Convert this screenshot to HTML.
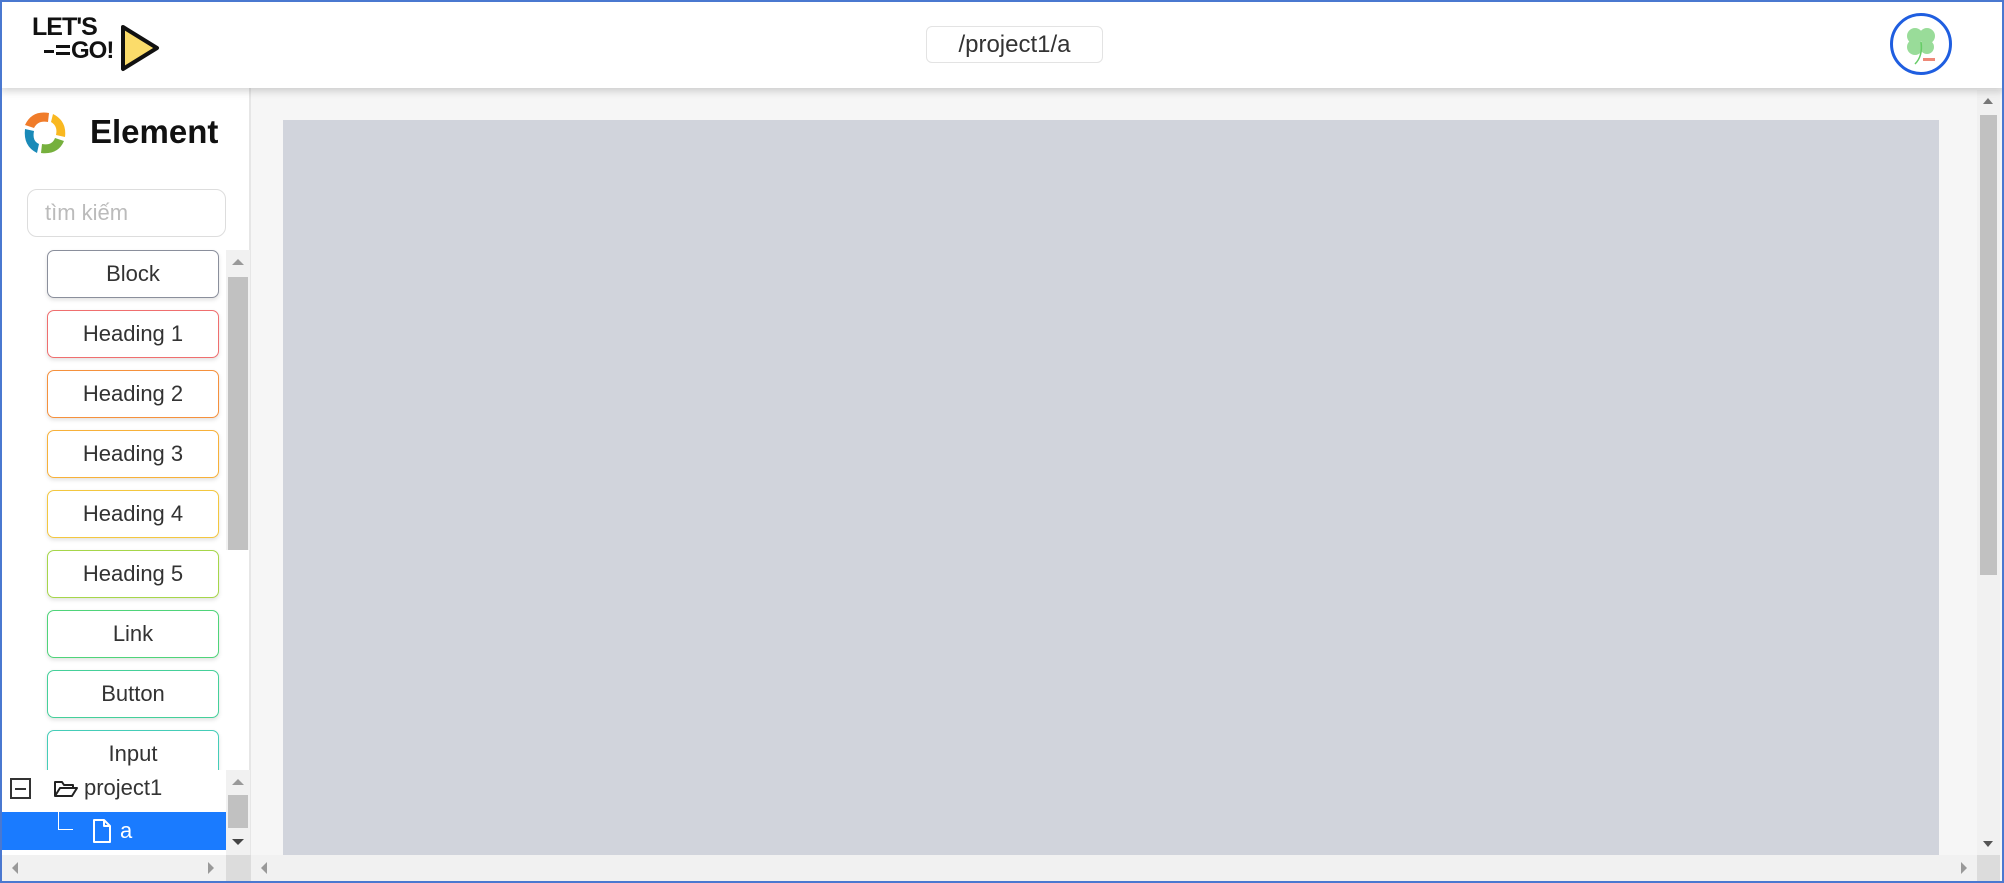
<!DOCTYPE html>
<html><head><meta charset="utf-8"><style>
*{box-sizing:border-box;margin:0;padding:0}
body{width:2004px;height:883px;overflow:hidden;background:#fff;font-family:"Liberation Sans",sans-serif;position:relative}
.frame{position:absolute;inset:0;border:2px solid #4a78d0;z-index:50;pointer-events:none}
.header{position:absolute;left:0;top:0;width:2004px;height:88px;background:#fff;box-shadow:0 3px 8px rgba(0,0,0,.18);z-index:10}
.path{position:absolute;left:926px;top:26px;width:177px;height:37px;border:1px solid #e3e3e3;border-radius:6px;font-size:24px;color:#333;text-align:center;line-height:35px}
.avatar{position:absolute;left:1890px;top:13px;width:62px;height:62px;border:3px solid #1f5ee0;border-radius:50%;background:#fff}
.side{position:absolute;left:0;top:88px;width:251px;height:795px;background:#fff;border-right:2px solid #e6e6e6}
.main{position:absolute;left:251px;top:88px;width:1753px;height:795px;background:#f6f6f6}
.canvas{position:absolute;left:283px;top:120px;width:1656px;height:736px;background:#d1d4dc}
.title{position:absolute;left:90px;top:25px;font-size:33px;font-weight:bold;color:#111}
.search{position:absolute;left:27px;top:101px;width:199px;height:48px;border:1px solid #ddd;border-radius:10px;font-size:22px;color:#bbb;padding-left:17px;line-height:46px}
.btn{position:absolute;left:47px;width:172px;height:48px;border:1.5px solid;border-radius:7px;background:#fff;font-size:22px;color:#333;text-align:center;line-height:45px;box-shadow:0 2px 4px rgba(0,0,0,.12)}
.sb{position:absolute;background:#f1f1f1}
.thumb{position:absolute;background:#c1c1c1}
.tree{position:absolute;left:0;top:770px;width:226px;height:80px;background:#fff}
</style></head><body>
<div class="frame"></div>
<div class="header">
  <div style="position:absolute;left:32px;top:13px;font-size:25px;font-weight:bold;color:#111;letter-spacing:-1px">LET'S</div>
  <div style="position:absolute;left:44px;top:50px;width:10px;height:3px;background:#111"></div>
  <div style="position:absolute;left:56px;top:45px;width:14px;height:3px;background:#111"></div>
  <div style="position:absolute;left:56px;top:52px;width:14px;height:3px;background:#111"></div>
  <div style="position:absolute;left:71px;top:37px;font-size:24px;font-weight:bold;color:#111;letter-spacing:-1px">GO!</div>
  <svg style="position:absolute;left:118px;top:23px" width="44" height="50"><path d="M5 4 L39 25 L5 46 Z" fill="#fbdc6a" stroke="#111" stroke-width="4" stroke-linejoin="round"/></svg>
  <div class="path">/project1/a</div>
  <div class="avatar"><svg width="56" height="56" viewBox="0 0 56 56"><g fill="#8fd98f" opacity=".9"><circle cx="22" cy="20" r="8"/><circle cx="34" cy="20" r="8"/><circle cx="22" cy="31" r="8"/><circle cx="34" cy="31" r="7"/></g><path d="M28 26 Q30 40 22 48" stroke="#6c6" stroke-width="1.5" fill="none"/><rect x="30" y="42" width="12" height="3" fill="#e87"/></svg></div>
</div>
<div class="main"></div>
<div class="canvas"></div>
<div class="sb" style="left:1977px;top:90px;width:23px;height:765px"></div>
<div class="thumb" style="left:1980px;top:115px;width:17px;height:460px"></div>
<div style="position:absolute;left:1983px;top:98px;border:5px solid transparent;border-bottom:6px solid #777;border-top:0"></div>
<div style="position:absolute;left:1983px;top:841px;border:5px solid transparent;border-top:6px solid #555;border-bottom:0"></div>
<div class="sb" style="left:251px;top:855px;width:1726px;height:26px"></div>
<div style="position:absolute;left:261px;top:862px;border:6px solid transparent;border-right:6px solid #999;border-left:0"></div>
<div style="position:absolute;left:1961px;top:862px;border:6px solid transparent;border-left:6px solid #999;border-right:0"></div>
<div class="sb" style="left:1977px;top:855px;width:23px;height:26px;background:#dcdcdc"></div>
<div class="side">
  <svg style="position:absolute;left:22px;top:22px" width="46" height="46" viewBox="0 0 46 46">
    <path d="M3 15 Q10 0 27 3 L26 12 Q16 10 12 18 Z" fill="#f07c2a"/>
    <path d="M31 4 Q45 11 43 27 L34 25 Q36 16 29 12 Z" fill="#f9b820"/>
    <path d="M42 31 Q36 45 19 43 L20 34 Q30 36 33 28 Z" fill="#76b03d"/>
    <path d="M15 43 Q1 36 3 19 L12 21 Q10 31 17 34 Z" fill="#1a8ab8"/>
  </svg>
  <div class="title">Element</div>
  <div class="search">tìm kiếm</div>
</div>
<div class="btn" style="top:250px;border-color:#8a8f9c">Block</div>
<div class="btn" style="top:310px;border-color:#ef6f6f">Heading 1</div>
<div class="btn" style="top:370px;border-color:#f5913d">Heading 2</div>
<div class="btn" style="top:430px;border-color:#f7b13a">Heading 3</div>
<div class="btn" style="top:490px;border-color:#f3c740">Heading 4</div>
<div class="btn" style="top:550px;border-color:#a6d64a">Heading 5</div>
<div class="btn" style="top:610px;border-color:#4fd47a">Link</div>
<div class="btn" style="top:670px;border-color:#45d09a">Button</div>
<div class="btn" style="top:730px;border-color:#45cdb8">Input</div>
<div class="sb" style="left:226px;top:250px;width:24px;height:300px"></div>
<div class="thumb" style="left:228px;top:277px;width:20px;height:273px"></div>
<div style="position:absolute;left:232px;top:259px;border:6px solid transparent;border-bottom:6px solid #999;border-top:0"></div>
<div class="tree">
  <svg style="position:absolute;left:10px;top:8px" width="22" height="22"><rect x="1" y="1" width="19" height="19" fill="#fff" stroke="#333" stroke-width="2"/><line x1="5" y1="11" x2="16" y2="11" stroke="#333" stroke-width="2"/></svg>
  <svg style="position:absolute;left:53px;top:9px" width="26" height="20"><path d="M2 17 V3 H9 L11 6 H20 V9 M2 17 L7 9 H24 L19 17 Z" fill="none" stroke="#222" stroke-width="2" stroke-linejoin="round"/></svg>
  <div style="position:absolute;left:84px;top:5px;font-size:22px;color:#333">project1</div>
  <div style="position:absolute;left:0;top:42px;width:226px;height:38px;background:#1a7bff"></div>
  <div style="position:absolute;left:58px;top:32px;width:15px;height:28px;border-left:1px solid #fff;border-bottom:1px solid #fff"></div>
  <svg style="position:absolute;left:92px;top:48px" width="20" height="26"><path d="M2 2 H12 L18 8 V24 H2 Z M12 2 V8 H18" fill="none" stroke="#fff" stroke-width="2" stroke-linejoin="round"/></svg>
  <div style="position:absolute;left:120px;top:48px;font-size:22px;color:#fff">a</div>
</div>
<div class="sb" style="left:226px;top:770px;width:24px;height:85px"></div>
<div class="thumb" style="left:228px;top:795px;width:20px;height:33px"></div>
<div style="position:absolute;left:232px;top:779px;border:6px solid transparent;border-bottom:6px solid #999;border-top:0"></div>
<div style="position:absolute;left:232px;top:839px;border:6px solid transparent;border-top:6px solid #444;border-bottom:0"></div>
<div class="sb" style="left:2px;top:855px;width:224px;height:26px"></div>
<div style="position:absolute;left:12px;top:862px;border:6px solid transparent;border-right:6px solid #999;border-left:0"></div>
<div style="position:absolute;left:208px;top:862px;border:6px solid transparent;border-left:6px solid #999;border-right:0"></div>
<div class="sb" style="left:226px;top:855px;width:25px;height:26px;background:#dcdcdc"></div>
</body></html>
